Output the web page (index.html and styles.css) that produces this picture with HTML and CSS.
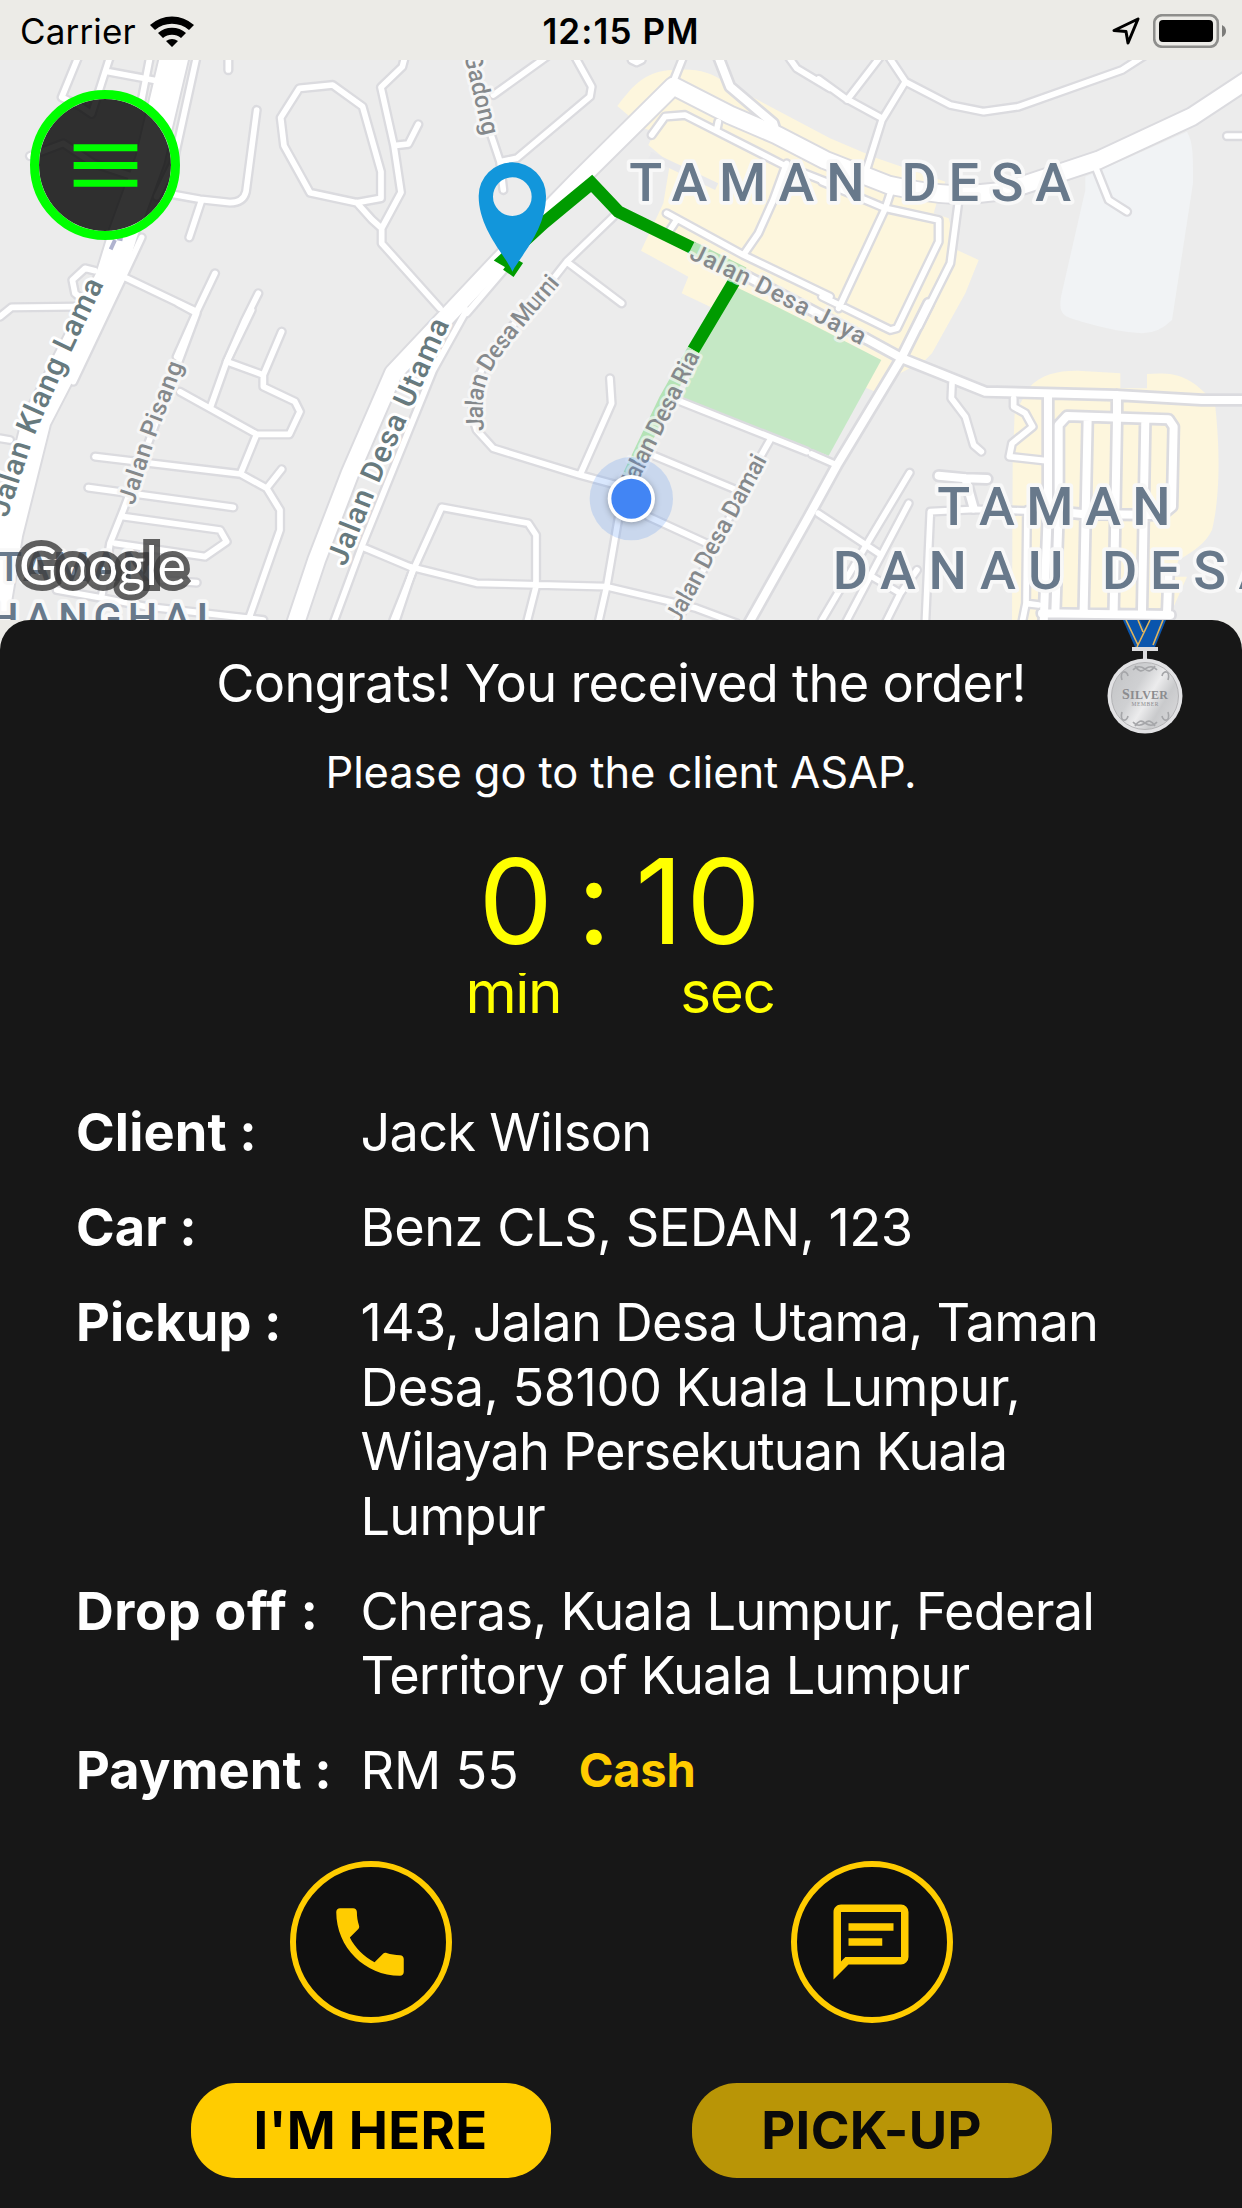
FILE: index.html
```html
<!DOCTYPE html>
<html lang="en">
<head>
<meta charset="utf-8">
<title>Order received</title>
<link rel="stylesheet" href="styles.css">
</head>
<body>
<div class="screen">
  <header class="status">
    <div class="status-left">
      <span class="carrier">Carrier</span>
      <svg class="wifi" viewBox="0 0 46 34"><path d="M1 11A33 33 0 0 1 45 11L40 16A26 26 0 0 0 6 16ZM9 19A21 21 0 0 1 37 19L32 24A14 14 0 0 0 14 24ZM17 27A10.500 10.500 0 0 1 29 27L23 33Z"/></svg>
    </div>
    <span class="clock">12:15 PM</span>
    <div class="status-right">
      <svg class="locate" viewBox="0 0 30 30"><path d="M27 3 3 14.500 15 15.500 17 27Z"/></svg>
      <svg class="battery" viewBox="0 0 74 34"><rect class="battery-shell" x="1.200" y="1.200" width="63.600" height="31.600" rx="8"/><rect x="6" y="6" width="54" height="22" rx="4"/><path class="battery-cap" d="M69 11Q73 13 73 17T69 23Z"/></svg>
    </div>
  </header>

  <section class="map">
    <svg class="map-art" viewBox="0 60 1242 560">
      <defs>
        <g id="minor">
          <g transform="scale(.33333)">
            <path d="M235 170 185 292 240 318 275 342 330 170M325 215 470 242M450 170 425 300M590 170 520 490 470 590M685 170V210M770 330 738 575Q730 608 690 608L600 598 500 580M605 600 568 712M898 265 998 255 1088 320 1143 515V595L1070 608 930 578 852 437 842 353ZM1070 608 1115 658 1145 685M1215 170 1207 200 1143 262 1182 437 1203 577 1145 685V730L1320 925M1182 437 1225 432 1255 373M370 830 590 935 645 820M590 935 530 1070M775 880 735 960 680 1085M285 812 255 805 217 840 225 880 250 900M0 950 35 922 230 920M425 712 370 830 220 1145M90 468 190 430 280 490 400 530"/>
          </g>
          <g transform="translate(410 0) scale(.33333)">
            <path d="M250 285 410 170M495 170 545 260 540 290 320 475 270 485 245 410 190 170M270 485 280 570M665 180 680 187 695 180M820 170 790 245M725 405 765 350 825 345 1120 495 1260 550M925 365 920 390M1135 170 1160 205 1260 265M610 650 470 785 380 900M470 785 635 910M770 640 1000 765 1260 890M800 660 780 690M1000 765 1045 700 1090 600 1130 490M290 800 170 940"/>
          </g>
          <g transform="translate(822 0) scale(.33333)">
            <path d="M-10 237 70 295 180 355M175 170 75 300M200 170 250 245 385 315 485 335 590 320 900 210 970 165M250 245 180 360 130 520M0 545 190 625 350 660V725L225 985 205 990 0 890M205 580 190 625 50 925M820 500 860 600 915 635M1215 408H1270M410 600 385 790 290 980"/>
          </g>
          <g transform="translate(0 310) scale(.33333)">
            <path d="M0 385 30 390M535 -20 590 10 370 600 330 700 305 860M755 0 680 155 632 290M845 65 790 195M680 155 790 195V230L885 275 900 305 868 373H770L540 245M770 373 722 490M285 440 722 492 800 535 840 600V660L745 930M845 478 800 535M265 533 700 592M370 620 660 660 680 695 615 740 345 700M170 840 310 865 440 890 790 930M480 810 590 818M1000 940 1085 710 1235 340 1300 180 1400 0M1090 712 1240 775 1185 940"/>
          </g>
          <g transform="translate(410 310) scale(.33333)">
            <path d="M0 770 200 820 590 830 800 880 860 895 980 940M10 780 -50 930M10 780 95 592 355 640 378 675V830L350 940M600 205 605 280 510 495M200 360 250 415 510 495 640 530M200 360C150 230 250 100 380 -30M640 540 590 830 565 940M800 270 1190 425M1205 432 1280 465M715 430 980 540M715 620 890 700M1080 390 1040 460 800 940M1225 610 1406 730"/>
          </g>
          <g transform="translate(822 310) scale(.33333)">
            <path d="M390 220 388 265 430 320 455 405 478 425M575 265V290L610 310 632 350 570 400 562 440 670 452M0 930 130 710 263 488M70 940 260 580M190 940 235 850 285 780M150 800 235 850M310 940 325 605 460 598 610 603M615 600 612 880 600 940M612 880 650 885"/>
          </g>
        </g>
        <g id="medium">
          <g transform="translate(410 0) scale(.33333)"><path d="M925 170 960 260 1090 370 1102 410M860 750 1366 1015"/></g>
          <g transform="translate(822 310) scale(.33333)">
            <path d="M130 85 240 145 490 245 880 255 1140 270H1270M320 -20 235 150 45 465 -40 620 -220 940M678 260V590L665 940M885 255V325M710 600V345L735 318 1040 328 1055 350 1050 590 1020 615 780 612 710 605 700 910M797 325 785 900M885 325 875 900M970 328 960 900M1040 780 1035 910M660 910 1045 915M350 497 430 505 495 507M430 505 455 595"/>
          </g>
        </g>
        <g id="major">
          <g transform="translate(410 0) scale(.33333)"><path d="M270 780 -50 1120 -180 1420 -280 1680 -350 1890M270 780 500 545 790 258 960 345 1100 405 1245 480 1436 555C1600 590 1660 590 1796 570L2066 480 2346 350 2520 235"/></g>
        </g>
        <path id="highway" transform="scale(.33333)" d="M523 170 450 480 370 700 330 830 265 960 110 1260 25 1600 -20 1870"/>
        <path id="klang" d="M22 625 100 385 212 130 315 -85"/>
        <path id="utama" d="M1036 772 1137 520 1240 285 1352 35"/>
        <path id="pisang" d="M401 587 466 385 552 160"/>
        <path id="murni" d="M222 362C216 290 216 235 240 190 285 110 350 40 457 -87"/>
        <path id="ria" d="M668 548 875 128"/>
        <path id="damai" d="M806 946 1077 440"/>
        <path id="jaya" d="M835 775 990 850 1236 975 1370 1045"/>
        <path id="gadong" d="M162 165 222 420"/>
      </defs>

      <g class="shops">
        <path transform="translate(410 0) scale(.33333)" d="M622 318C660 270 700 210 790 210 860 205 900 215 950 250L1260 415 1401 475 1606 545 1581 605 1571 640 1616 655 1641 750 1706 780 1666 880 1566 1060 1546 1080 1461 1125 1396 1175 1371 1165 1100 970 900 920 815 880 835 830 693 752 760 610 780 490 715 435 735 395 700 385Z"/>
        <path transform="translate(822 310) scale(.33333)" d="M622 232C660 190 720 180 780 183L895 190V235H975V192C1060 185 1100 200 1150 250L1180 290C1200 480 1185 600 1170 660 1150 700 1120 720 1070 750L1050 800H1095L1055 890 1060 940H570L572 460 578 310Z"/>
      </g>
      <path class="plain" transform="translate(822 0) scale(.33333)" d="M1095 395C1115 430 1113 470 1113 550L1050 960Q1010 1000 960 1000 880 995 780 965C720 950 710 940 717 890L790 570V530Z"/>
      <path class="park" transform="translate(410 310) scale(.33333)" d="M955 -80 1090 -15 1200 40 1414 150 1256 437 815 265 870 120Z"/>
      <path class="lane" transform="translate(410 0) scale(.33333)" d="M720 465 920 560"/>

      <use href="#minor" class="case case-minor"/>
      <use href="#medium" class="case case-medium"/>
      <use href="#major" class="case case-major"/>
      <use href="#highway" class="case case-highway"/>
      <use href="#minor" class="road road-minor"/>
      <use href="#medium" class="road road-medium"/>
      <use href="#major" class="road road-major"/>
      <use href="#highway" class="road road-highway"/>
      <path class="tick" transform="scale(.33333)" d="M332 748 345 720M352 715 368 718"/>

      <g transform="translate(410 0) scale(.33333)">
        <path class="route" d="M295 820 312 795 283 778 400 670 545 550 625 635 850 745M972 845 850 1050"/>
        <path class="route route-faded" d="M845 742 985 812 972 845M850 1050 765 1200 655 1430"/>
      </g>

      <g transform="scale(.33333)">
        <g transform="translate(0 930)">
          <text class="street street-main"><textPath href="#klang" textLength="762">Jalan Klang Lama</textPath></text>
          <text class="street street-main"><textPath href="#utama" textLength="795">Jalan Desa Utama</textPath></text>
          <text class="street"><textPath href="#pisang" textLength="448">Jalan Pisang</textPath></text>
          <text class="district district-small" x="-10" y="813" textLength="465">TAMAN</text>
          <text class="district district-small" x="-125" y="965" textLength="750">SHANGHAI</text>
        </g>
        <g transform="translate(1230 930)">
          <text class="street"><textPath href="#murni" textLength="518">Jalan Desa Murni</textPath></text>
          <text class="street street-over"><textPath href="#ria" textLength="458">Jalan Desa Ria</textPath></text>
          <text class="street"><textPath href="#damai" textLength="563">Jalan Desa Damai</textPath></text>
        </g>
        <g transform="translate(1230 0)">
          <text class="street street-over"><textPath href="#jaya" textLength="580">Jalan Desa Jaya</textPath></text>
          <text class="street"><textPath href="#gadong" textLength="250">Gadong</textPath></text>
          <text class="district" x="658" y="602" textLength="1325">TAMAN DESA</text>
        </g>
        <g transform="translate(2466 930)">
          <text class="district" x="346" y="645" textLength="700">TAMAN</text>
          <text class="district" x="32" y="838" textLength="1325">DANAU DESA</text>
        </g>
      </g>

      <g transform="translate(410 310) scale(.33333)">
        <circle class="accuracy" cx="664" cy="566" r="125"/>
        <circle class="here-ring" cx="664" cy="566" r="71"/>
        <circle class="here" cx="664" cy="566" r="60"/>
      </g>
      <path class="pin" transform="translate(410 0) scale(.33333)" fill-rule="evenodd" d="M307 815C290 770 206 690 206 588A101 101 0 0 1 408 588C408 690 330 770 307 815ZM307 532A58 58 0 1 0 307 648 58 58 0 1 0 307 532Z"/>
      <text class="google" x="19" y="585" textLength="167">Google</text>
    </svg>
    <button class="menu" aria-label="Menu">
      <svg viewBox="0 0 24 24"><path d="M3 18h18v-2H3v2zm0-5h18v-2H3v2zm0-7v2h18V6H3z"/></svg>
    </button>
  </section>

  <main class="sheet">
    <svg class="medal" viewBox="0 0 76 116">
      <defs>
        <linearGradient id="silver" x1="0" x2="1" y1=".2" y2=".8"><stop offset="0" stop-color="#c4c5c7"/><stop offset=".35" stop-color="#cfd0d2"/><stop offset=".55" stop-color="#ececed"/><stop offset=".75" stop-color="#c9cacc"/><stop offset="1" stop-color="#d8d8da"/></linearGradient>
      </defs>
      <path fill="#0a55ad" d="M16 0H59L48 27H28Z"/>
      <path fill="#083f86" d="M33 0H43L38 9Z"/>
      <path class="medal-trim" d="M19 0 31 25M31 0 36 12M43 0 30 27M56 0 46 25"/>
      <path fill="#dcdcde" d="M25 27H51V31H40V40H36V31H25Z"/>
      <circle cx="38" cy="76" r="37.500" fill="#e2e2e4"/>
      <circle cx="38" cy="76" r="33.500" fill="url(#silver)" stroke="#a9aaac" stroke-width=".8"/>
      <path class="medal-leaf" d="M15 60C12 50 20 50 21 56M61 60C64 50 56 50 55 56M26 50Q31 44 38 49 45 44 50 50M28 46Q33 54 38 49 43 54 48 46M15 92C12 102 20 102 21 96M61 92C64 102 56 102 55 96M26 102Q31 108 38 103 45 108 50 102M28 106Q33 98 38 103 43 98 48 106"/>
      <text class="medal-name" x="38" y="79" textLength="46">S<tspan class="medal-caps">ILVER</tspan></text>
      <text class="medal-sub" x="38" y="86" textLength="27">MEMBER</text>
    </svg>

    <h1 class="title">Congrats! You received the order!</h1>
    <p class="subtitle">Please go to the client ASAP.</p>
    <div class="timer">0 : 10</div>
    <div class="units"><span>min</span><span>sec</span></div>

    <dl class="details">
      <dt>Client :</dt><dd>Jack Wilson</dd>
      <dt>Car :</dt><dd class="loose">Benz CLS, SEDAN, 123</dd>
      <dt>Pickup :</dt><dd>143, Jalan Desa Utama, Taman<br><span class="loose">Desa, 58100 Kuala Lumpur,</span><br><span class="tight">Wilayah Persekutuan Kuala</span><br>Lumpur</dd>
      <dt class="wide">Drop off :</dt><dd>Cheras, Kuala Lumpur, Federal<br><span class="tight">Territory of Kuala Lumpur</span></dd>
      <dt>Payment :</dt><dd class="payment">RM 55<strong>Cash</strong></dd>
    </dl>

    <div class="actions">
      <div class="action">
        <button class="round" aria-label="Call"><svg viewBox="0 0 24 24"><path d="M6.620 10.790c1.440 2.830 3.760 5.140 6.590 6.590l2.200-2.200c.27-.27.67-.36 1.020-.24 1.120.37 2.330.57 3.570.57.55 0 1 .45 1 1V20c0 .55-.45 1-1 1-9.390 0-17-7.610-17-17 0-.55.45-1 1-1h3.500c.55 0 1 .45 1 1 0 1.250.2 2.450.57 3.570.11.35.03.74-.25 1.020l-2.200 2.200z"/></svg></button>
        <button class="pill">I'M HERE</button>
      </div>
      <div class="action">
        <button class="round" aria-label="Message"><svg viewBox="0 0 24 24"><path d="M20 2A2 2 0 0 1 22 4V16A2 2 0 0 1 20 18H6L2 22V4C2 2.890 2.900 2 4 2H20M4 4V17.170L5.170 16H20V4H4M6 7H18V9H6V7M6 11H15V13H6V11Z"/></svg></button>
        <button class="pill pill-off">PICK-UP</button>
      </div>
    </div>
  </main>
</div>
</body>
</html>
```
FILE: styles.css
```css
* { box-sizing: border-box; }
body { margin: 0; background: #ecebe7; font-family: Inter, "Liberation Sans", sans-serif; }
button { padding: 0; font: inherit; }
.screen { display: flex; flex-direction: column; width: 1242px; height: 2208px; overflow: hidden; }

.status { display: grid; grid-template-columns: 1fr auto 1fr; align-items: center; height: 60px; padding: 0 15px 0 20px; font-size: 35px; line-height: 60px; color: #000; }
.status-left, .status-right { display: flex; align-items: center; }
.status-left { gap: 13px; }
.status-right { justify-content: flex-end; gap: 12px; }
.carrier, .clock { padding-top: 1px; }
.carrier { letter-spacing: .15px; }
.clock { margin-left: -5px; font-weight: 600; letter-spacing: 1.1px; }
.wifi { width: 46px; height: 34px; }
.locate { width: 30px; height: 30px; fill: none; stroke: #000; stroke-width: 3; stroke-linejoin: round; }
.battery { width: 74px; height: 34px; }
.battery-shell { fill: none; stroke: #8e8e8c; stroke-width: 2.6; }
.battery-cap { fill: #7c7c7a; }

.map { position: relative; height: 560px; background: #ececec; }
.map-art { display: block; width: 1242px; height: 560px; }
.shops { fill: #fdf6dd; }
.plain { fill: #f1f3f5; }
.park { fill: #c5e8c5; }
.lane { fill: none; stroke: #e9e9eb; stroke-width: 22; }
.case, .road { fill: none; stroke-linejoin: round; stroke-linecap: round; }
.case { stroke: #dbdbdf; }
.road { stroke: #fff; }
.case-minor { stroke-width: 31; }
.road-minor { stroke-width: 17; }
.case-medium { stroke-width: 40; }
.road-medium { stroke-width: 24; }
.case-major { stroke-width: 62; }
.road-major { stroke-width: 50; }
.case-highway { stroke-width: 96; }
.road-highway { stroke-width: 84; }
.tick { fill: none; stroke: #b0b3cf; stroke-width: 12; }
.route { fill: none; stroke: #009b00; stroke-width: 38; }
.route-faded { stroke: #b5e3b5; }
.street { font: 500 73px Roboto, sans-serif; fill: #85898c; stroke: #f6f6f6; stroke-width: 18; stroke-linejoin: round; paint-order: stroke; }
.street-over { stroke: rgba(246, 246, 246, .7); }
.street-main { font-size: 90px; fill: #677a7e; stroke: #fff; }
.district { font: 500 162px Roboto, sans-serif; fill: #68798b; stroke: #f8f8f8; stroke-width: 22; stroke-linejoin: round; paint-order: stroke; }
.district-small { font-size: 124px; }
.google { font: 400 54px Lato, sans-serif; fill: #fff; stroke: rgba(60, 60, 60, .8); stroke-width: 12; paint-order: stroke; }
.accuracy { fill: rgba(66, 133, 244, .2); }
.here-ring { fill: #fff; filter: drop-shadow(0 4px 10px rgba(0, 0, 0, .3)); }
.here { fill: #4285f4; }
.pin { fill: #1296db; }
.menu { position: absolute; left: 30px; top: 30px; display: grid; place-items: center; width: 150px; height: 150px; border: 9px solid #0f0; border-radius: 50%; background: rgba(0, 0, 0, .8); background-clip: padding-box; }
.menu svg { width: 85px; height: 85px; fill: #0f0; }

.sheet { position: relative; flex: 1; display: flex; flex-direction: column; padding-top: 31px; border-radius: 30px 30px 0 0; background: #171717; color: #fff; }
.medal { position: absolute; left: 1106.5px; top: 0; width: 76px; height: 116px; }
.medal-trim { fill: none; stroke: #e0b45c; stroke-width: 1.6; }
.medal-leaf { fill: none; stroke: #a5a6a9; stroke-width: 1.6; }
.medal-name { font: 700 14px "Liberation Serif", serif; text-anchor: middle; fill: #8b8b8e; }
.medal-caps { font-size: 12px; }
.medal-sub { font: 5.5px "Liberation Serif", serif; text-anchor: middle; fill: #8b8b8e; }
.title { margin: 0; font-size: 52.3px; font-weight: 400; line-height: 64px; letter-spacing: -.7px; text-align: center; }
.subtitle { margin: 30px 0 0; font-size: 43.5px; line-height: 54px; letter-spacing: -.1px; text-align: center; }
.timer { margin-top: 30px; font-size: 118px; line-height: 144px; letter-spacing: 3px; word-spacing: -15px; font-feature-settings: "calt" 0; text-align: center; color: #ff0; }
.units { display: flex; justify-content: center; gap: 119px; height: 60px; margin-right: 2px; overflow: hidden; font-size: 58.5px; line-height: 38px; letter-spacing: -1.4px; color: #ff0; }
.details { display: grid; grid-template-columns: 284.5px 1fr; row-gap: 30.5px; margin: 67px 0 0; padding-left: 76px; font-size: 52.3px; line-height: 64.5px; white-space: nowrap; }
.details dt { font-weight: 700; letter-spacing: .15px; }
.details dt.wide { letter-spacing: .6px; }
.details dd { margin: 0; letter-spacing: -.75px; }
.details .loose { letter-spacing: -.5px; }
.details .tight { letter-spacing: -.9px; }
.details .payment { display: flex; gap: 60px; letter-spacing: -.2px; }
.payment strong { font-size: 47px; color: #fc0; }
.actions { display: flex; justify-content: center; gap: 141px; margin-top: 58px; }
.action { display: flex; flex-direction: column; align-items: center; gap: 60px; }
.round { display: grid; place-items: center; width: 162px; height: 162px; border: 6px solid #fc0; border-radius: 50%; background: #101010; }
.round svg { width: 90px; height: 90px; margin-left: -2px; fill: #fc0; }
.pill { width: 360px; height: 95px; border: 0; border-radius: 45px; background: #fc0; font-size: 52.5px; font-weight: 700; letter-spacing: .3px; color: #000; }
.pill-off { background: #b99506; color: #0a0a0a; }
```
